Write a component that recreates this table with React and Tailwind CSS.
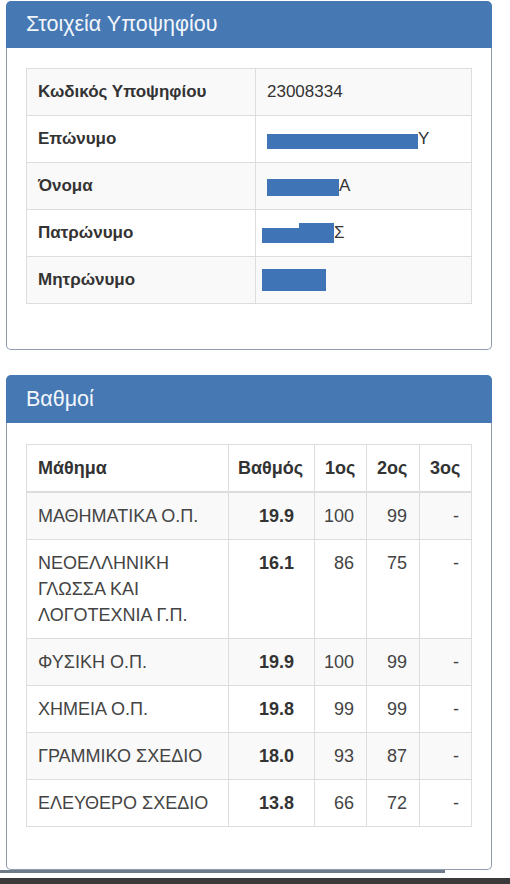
import React from "react";

const font = { fontFamily: '"Liberation Sans", Arial, sans-serif' };

function InfoRow({ label, striped, children }) {
  return (
    <tr className={striped ? "bg-[#f9f9f9]" : "bg-white"}>
      <td className="w-[229px] border border-[#dddddd] px-[11px] py-[10px] text-[17px] leading-[26px] font-bold text-[#333333]">
        {label}
      </td>
      <td className="relative border border-[#dddddd] px-[11px] py-[10px] text-[17px] leading-[26px] text-[#333333]">
        {children}
      </td>
    </tr>
  );
}

const grades = [
  { name: ["ΜΑΘΗΜΑΤΙΚΑ Ο.Π."], g: "19.9", a: "100", b: "99" },
  { name: ["ΝΕΟΕΛΛΗΝΙΚΗ", "ΓΛΩΣΣΑ ΚΑΙ", "ΛΟΓΟΤΕΧΝΙΑ Γ.Π."], g: "16.1", a: "86", b: "75" },
  { name: ["ΦΥΣΙΚΗ Ο.Π."], g: "19.9", a: "100", b: "99" },
  { name: ["ΧΗΜΕΙΑ Ο.Π."], g: "19.8", a: "99", b: "99" },
  { name: ["ΓΡΑΜΜΙΚΟ ΣΧΕΔΙΟ"], g: "18.0", a: "93", b: "87" },
  { name: ["ΕΛΕΥΘΕΡΟ ΣΧΕΔΙΟ"], g: "13.8", a: "66", b: "72" },
];

export default function App() {
  return (
    <div className="relative w-[510px] h-[884px] overflow-hidden bg-white" style={font}>
      <div className="pt-[1px] pl-[6px]">
        {/* Panel 1 */}
        <div className="w-[486px]">
          <div className="h-[47px] rounded-t-[5px] bg-[#4679b4] px-[20px] flex items-center text-[21.5px] text-[#f2f6fb]">
            Στοιχεία Υποψηφίου
          </div>
          <div className="border-x border-b border-[#8d9bad] rounded-b-[5px] px-[19px] pt-[20px] pb-[45px]">
            <table className="w-full border-collapse">
              <tbody>
                <InfoRow label="Κωδικός Υποψηφίου" striped>
                  23008334
                </InfoRow>
                <InfoRow label="Επώνυμο">
                  <span className="pl-[151px]">Υ</span>
                  <span className="absolute left-[11px] top-[18px] w-[151px] h-[15px] bg-[#3f74b6]" />
                </InfoRow>
                <InfoRow label="Όνομα" striped>
                  <span className="pl-[72px]">Α</span>
                  <span className="absolute left-[11px] top-[16px] w-[72px] h-[17px] bg-[#3f74b6]" />
                </InfoRow>
                <InfoRow label="Πατρώνυμο">
                  <span className="pl-[67px]">Σ</span>
                  <span className="absolute left-[6px] top-[18px] w-[72px] h-[15px] bg-[#3f74b6]" />
                  <span className="absolute left-[43px] top-[13px] w-[35px] h-[6px] bg-[#3f74b6]" />
                </InfoRow>
                <InfoRow label="Μητρώνυμο" striped>
                  <span>&nbsp;</span>
                  <span className="absolute left-[6px] top-[12px] w-[64px] h-[22px] bg-[#3f74b6]" />
                </InfoRow>
              </tbody>
            </table>
          </div>
        </div>

        {/* Panel 2 */}
        <div className="w-[486px] mt-[25px]">
          <div className="h-[48px] rounded-t-[5px] bg-[#4679b4] px-[20px] flex items-center text-[21.5px] text-[#f2f6fb]">
            Βαθμοί
          </div>
          <div className="border-x border-b border-[#8d9bad] rounded-b-[5px] px-[19px] pt-[21px] pb-[42px]">
            <table className="w-full table-fixed border-collapse text-[18px] leading-[26px]">
              <colgroup>
                <col className="w-[202px]" />
                <col className="w-[86px]" />
                <col className="w-[52px]" />
                <col className="w-[53px]" />
                <col className="w-[52px]" />
              </colgroup>
              <thead>
                <tr className="bg-white">
                  <th className="border border-[#dddddd] border-b-2 px-[11px] py-[10px] text-left font-bold text-[#333333]">Μάθημα</th>
                  <th className="border border-[#dddddd] border-b-2 pl-[9px] pr-[2px] py-[10px] text-left font-bold text-[#333333] whitespace-nowrap">Βαθμός</th>
                  <th className="border border-[#dddddd] border-b-2 pl-[10px] pr-[1px] py-[10px] text-left font-bold text-[#333333] whitespace-nowrap">1ος</th>
                  <th className="border border-[#dddddd] border-b-2 pl-[10px] pr-[1px] py-[10px] text-left font-bold text-[#333333] whitespace-nowrap">2ος</th>
                  <th className="border border-[#dddddd] border-b-2 pl-[10px] pr-[1px] py-[10px] text-left font-bold text-[#333333] whitespace-nowrap">3ος</th>
                </tr>
              </thead>
              <tbody>
                {grades.map((r, i) => (
                  <tr key={i} className={i % 2 === 0 ? "bg-[#f9f9f9]" : "bg-white"}>
                    <td className="border border-[#dddddd] px-[11px] py-[10px] align-top text-[#444444]">
                      {r.name.map((l, j) => (
                        <div key={j} className="whitespace-nowrap">{l}</div>
                      ))}
                    </td>
                    <td className="border border-[#dddddd] pl-[8px] pr-[20px] py-[10px] align-top text-right font-bold text-[#333333]">{r.g}</td>
                    <td className="border border-[#dddddd] pl-[4px] pr-[12px] py-[10px] align-top text-right text-[#444444]">{r.a}</td>
                    <td className="border border-[#dddddd] pl-[4px] pr-[12px] py-[10px] align-top text-right text-[#444444]">{r.b}</td>
                    <td className="border border-[#dddddd] pl-[4px] pr-[12px] py-[10px] align-top text-right text-[#444444]">-</td>
                  </tr>
                ))}
              </tbody>
            </table>
          </div>
        </div>
      </div>
      <div className="w-[445px] h-[3px] bg-[#6f7b88]" />
      <div className="h-[5px] bg-white" />
      <div className="h-[10px] bg-[#3a3a3a]" />
    </div>
  );
}
